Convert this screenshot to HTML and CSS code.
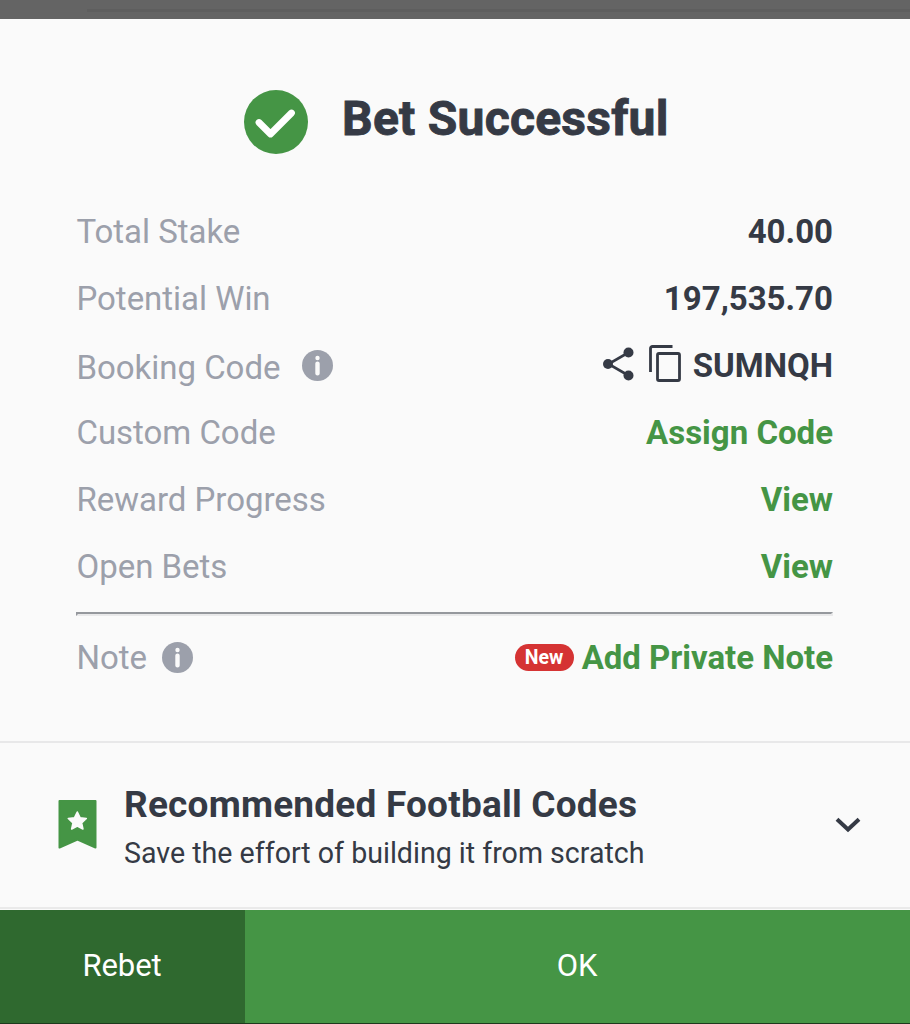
FILE: index.html
```html
<!DOCTYPE html>
<html lang="en">
    <head>
        <meta charset="utf-8">
        <title>Bet Successful</title>
        <meta name="viewport" content="width=device-width, initial-scale=1">
        <link rel="stylesheet" href="styles.css">
    </head>
    <body>
        <div class="overlay"><span class="overlay-line"></span></div>

        <main class="dialog">
            <header class="header">
                <svg class="check" viewBox="0 0 64 64">
                    <circle cx="32" cy="32" r="32"/>
                    <path d="M15 32.500l11.500 11.500L47.500 23"/>
                </svg>
                <h1>Bet Successful</h1>
            </header>

            <ul class="details">
                <li><span class="label">Total Stake</span><span class="value">40.00</span></li>
                <li><span class="label">Potential Win</span><span class="value">197,535.70</span></li>
                <li class="booking">
                    <span class="label">Booking Code
                        <svg class="info" viewBox="0 0 31 31">
                            <circle cx="15.500" cy="15.500" r="15.500"/>
                            <circle class="mark" cx="15.500" cy="8" r="2.200"/>
                            <path class="mark" d="M13.300 13.500a2.200 2 0 0 1 4.400 0v10a2.200 2 0 0 1-4.400 0z"/>
                        </svg>
                    </span>
                    <span class="value">
                        <svg class="share" viewBox="0 0 31 34">
                            <path d="M25.500 5.500L5.500 17l20 11.500"/>
                            <circle cx="25.500" cy="5.500" r="5"/>
                            <circle cx="5" cy="17" r="5"/>
                            <circle cx="25.500" cy="28.500" r="5"/>
                        </svg>
                        <svg class="copy" viewBox="0 0 32 37">
                            <path d="M1.500 27V3.500a2 2 0 0 1 2-2H23.500"/>
                            <rect x="8.500" y="8.500" width="22" height="27" rx="1.500"/>
                        </svg>
                        <span class="code">SUMNQH</span>
                    </span>
                </li>
                <li><span class="label">Custom Code</span><a class="value link" href="#">Assign Code</a></li>
                <li><span class="label">Reward Progress</span><a class="value link" href="#">View</a></li>
                <li><span class="label">Open Bets</span><a class="value link" href="#">View</a></li>
            </ul>

            <hr class="divider">

            <div class="note">
                <span class="label">Note
                    <svg class="info" viewBox="0 0 31 31">
                        <circle cx="15.500" cy="15.500" r="15.500"/>
                        <circle class="mark" cx="15.500" cy="8" r="2.200"/>
                        <path class="mark" d="M13.300 13.500a2.200 2 0 0 1 4.400 0v10a2.200 2 0 0 1-4.400 0z"/>
                    </svg>
                </span>
                <span class="note-action">
                    <span class="badge">New</span>
                    <a class="value link" href="#">Add Private Note</a>
                </span>
            </div>

            <section class="recommended">
                <svg class="bookmark" viewBox="0 0 39 49">
                    <path d="M1.500 1h36v46.500L19.500 39.500 1.500 47.500z"/>
                    <path class="star" d="M19.300 12l2.700 5.700 6.300.8-4.700 4.300 1.300 6.200-5.600-3-5.600 3 1.300-6.200-4.700-4.300 6.300-.8z"/>
                </svg>
                <div class="recommended-text">
                    <h2>Recommended Football Codes</h2>
                    <p>Save the effort of building it from scratch</p>
                </div>
                <svg class="chevron" viewBox="0 0 26 16">
                    <path d="M2 2.300l11 10.200L24 2.300"/>
                </svg>
            </section>
        </main>

        <footer class="actions">
            <button class="rebet">Rebet</button>
            <button class="ok">OK</button>
        </footer>
    </body>
</html>
```

FILE: styles.css
```css
*{
    box-sizing: border-box;
}

body{
    margin: 0;
    height: 1024px;
    display: flex;
    flex-direction: column;
    overflow: hidden;
    background: #fafafa;
    color: #353a45;
    font-family: Roboto, "Liberation Sans", sans-serif;
}

h1, h2, p, ul{
    margin: 0;
    padding: 0;
}

a{
    text-decoration: none;
}

svg{
    display: block;
    flex: none;
}

.overlay{
    height: 19px;
    padding: 9px 0 0 87px;
    background: #646464;
}

.overlay-line{
    display: block;
    height: 3px;
    background: #5e5e5e;
}

.dialog{
    flex: 1;
}

.header{
    display: flex;
    align-items: center;
    height: 179px;
    padding: 26px 0 0 244px;
}

.check{
    width: 64px;
    height: 64px;
    fill: #459545;
}

.check path{
    fill: none;
    stroke: #fff;
    stroke-width: 6.8;
    stroke-linecap: round;
    stroke-linejoin: round;
}

h1{
    margin: -6px 0 0 34px;
    font-size: 48px;
    font-weight: 700;
    letter-spacing: .25px;
    white-space: nowrap;
    -webkit-text-stroke: .9px #353a45;
}

.details{
    list-style: none;
    padding: 0 77px;
}

.details li, .note{
    display: flex;
    align-items: center;
    justify-content: space-between;
    height: 67px;
    font-size: 33px;
}

.label{
    display: flex;
    align-items: center;
    margin-left: -.5px;
    color: #9ca0ab;
    letter-spacing: -.03px;
}

.value{
    display: flex;
    align-items: center;
    font-weight: 700;
}

.link{
    color: #459545;
}

.info{
    width: 31px;
    height: 31px;
    margin-left: 22px;
    fill: #9ca0ab;
}

.info .mark{
    fill: #fafafa;
}

.booking .label{
    padding-top: 4px;
}

.booking .info{
    margin-top: -4px;
}

.share{
    width: 31px;
    height: 34px;
    margin: -3px 15px 0 0;
    fill: #353a45;
}

.share path{
    fill: none;
    stroke: #353a45;
    stroke-width: 2.6;
}

.copy{
    width: 32px;
    height: 37px;
    margin: -5px 12px 0 0;
    fill: none;
    stroke: #353a45;
    stroke-width: 2.8;
}

.divider{
    height: 4px;
    margin: 12px 77px 0 76px;
    border: 2px solid;
    border-color: #95989d #e9e9ea #e9e9ea #95989d;
}

.note{
    height: 82px;
    padding: 0 77px;
}

.note .info{
    margin-left: 15px;
}

.note-action{
    display: flex;
    align-items: center;
    gap: 8px;
}

.note-action .link{
    letter-spacing: -.03px;
}

.badge{
    width: 59px;
    height: 27px;
    border-radius: 14px;
    background: #d53333;
    color: #fff;
    font-size: 19.5px;
    font-weight: 700;
    line-height: 27px;
    text-align: center;
}

.recommended{
    display: flex;
    align-items: center;
    height: 168px;
    margin-top: 43px;
    padding: 0 49px 0 57.5px;
    border-top: 2px solid #e8e8e9;
    border-bottom: 2px solid #eaeaea;
}

.bookmark{
    width: 39px;
    height: 49px;
    margin-top: -2px;
    fill: #459545;
    stroke: #459545;
    stroke-width: 2;
    stroke-linejoin: round;
}

.bookmark .star{
    fill: #fafafa;
    stroke: #fafafa;
    stroke-width: 1.6;
}

.recommended-text{
    flex: 1;
    margin-left: 27.5px;
    padding-top: 4px;
    white-space: nowrap;
}

h2{
    font-size: 37px;
    font-weight: 700;
    letter-spacing: .2px;
    line-height: 51px;
}

.recommended p{
    font-size: 28.6px;
    line-height: 46px;
}

.chevron{
    width: 26px;
    height: 16px;
    fill: none;
    stroke: #353a45;
    stroke-width: 4;
}

.actions{
    display: flex;
    height: 114px;
    border-bottom: 1px solid #1d3a1d;
}

.actions button{
    border: 0;
    padding: 0 1px 2px 0;
    color: #fff;
    font-family: inherit;
    font-size: 31px;
    letter-spacing: -.1px;
}

.rebet{
    width: 245px;
    background: #2f692f;
}

.ok{
    flex: 1;
    background: #459545;
}
```
